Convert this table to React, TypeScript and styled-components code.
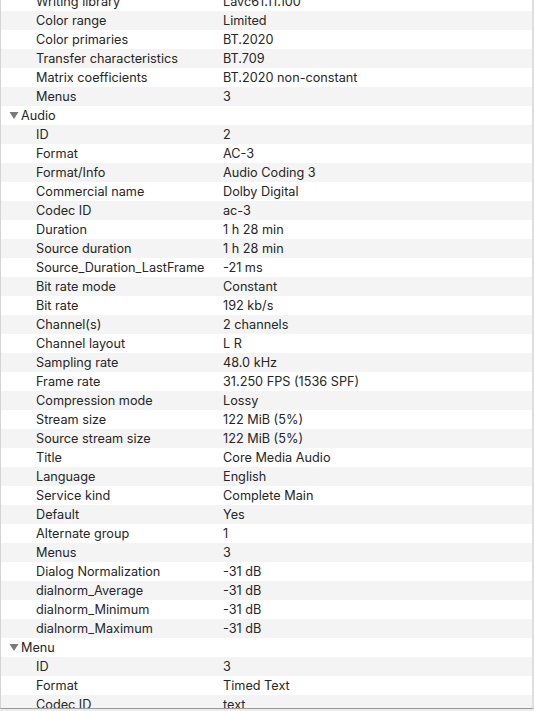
import * as React from "react";
import styled, { createGlobalStyle } from "styled-components";

const GlobalStyle = createGlobalStyle`
  html, body {
    margin: 0;
    padding: 0;
    background: #ececec;
    overflow: hidden;
  }
`;

const Window = styled.div`
  width: 534px;
  height: 709px;
  box-sizing: border-box;
  background: #ffffff;
  border-left: 1px solid #d4d4d4;
  border-right: 2px solid #dedede;
  border-bottom: 1px solid #9a9a9a;
  overflow: hidden;
  font-family: Inter, "Liberation Sans", sans-serif;
  font-size: 12.7px;
  color: #262626;
`;

const List = styled.div`
  display: flex;
  flex-direction: column;
  margin-top: -8px;
`;

const Row = styled.div<{ $striped: boolean }>`
  display: grid;
  grid-template-columns: 222px 1fr;
  height: 19px;
  box-sizing: border-box;
  padding-bottom: 1px;
  align-items: center;
  background: ${(p) => (p.$striped ? "#f4f4f4" : "#ffffff")};
  white-space: nowrap;
`;

const Label = styled.span`
  padding-left: 35px;
`;

const Value = styled.span``;

const SectionLabel = styled.span`
  display: flex;
  align-items: center;
  padding-left: 8px;
  gap: 2px;
`;

const Disclosure = styled.svg`
  width: 10px;
  height: 10px;
  fill: #7a7a7a;
`;

type Item = [string, string] | { section: string };

const items: Item[] = [
  ["Writing library", "Lavc61.11.100"],
  ["Color range", "Limited"],
  ["Color primaries", "BT.2020"],
  ["Transfer characteristics", "BT.709"],
  ["Matrix coefficients", "BT.2020 non-constant"],
  ["Menus", "3"],
  { section: "Audio" },
  ["ID", "2"],
  ["Format", "AC-3"],
  ["Format/Info", "Audio Coding 3"],
  ["Commercial name", "Dolby Digital"],
  ["Codec ID", "ac-3"],
  ["Duration", "1 h 28 min"],
  ["Source duration", "1 h 28 min"],
  ["Source_Duration_LastFrame", "-21 ms"],
  ["Bit rate mode", "Constant"],
  ["Bit rate", "192 kb/s"],
  ["Channel(s)", "2 channels"],
  ["Channel layout", "L R"],
  ["Sampling rate", "48.0 kHz"],
  ["Frame rate", "31.250 FPS (1536 SPF)"],
  ["Compression mode", "Lossy"],
  ["Stream size", "122 MiB (5%)"],
  ["Source stream size", "122 MiB (5%)"],
  ["Title", "Core Media Audio"],
  ["Language", "English"],
  ["Service kind", "Complete Main"],
  ["Default", "Yes"],
  ["Alternate group", "1"],
  ["Menus", "3"],
  ["Dialog Normalization", "-31 dB"],
  ["dialnorm_Average", "-31 dB"],
  ["dialnorm_Minimum", "-31 dB"],
  ["dialnorm_Maximum", "-31 dB"],
  { section: "Menu" },
  ["ID", "3"],
  ["Format", "Timed Text"],
  ["Codec ID", "text"],
];

const App = () => (
  <>
    <GlobalStyle />
    <Window>
      <List>
        {items.map((item, i) =>
          Array.isArray(item) ? (
            <Row key={i} $striped={i % 2 === 1}>
              <Label>{item[0]}</Label>
              <Value>{item[1]}</Value>
            </Row>
          ) : (
            <Row key={i} $striped={i % 2 === 1}>
              <SectionLabel>
                <Disclosure viewBox="0 0 10 10">
                  <path d="M0.5 2 L9.5 2 L5 9 Z" />
                </Disclosure>
                {item.section}
              </SectionLabel>
              <Value />
            </Row>
          )
        )}
      </List>
    </Window>
  </>
);

export default App;
